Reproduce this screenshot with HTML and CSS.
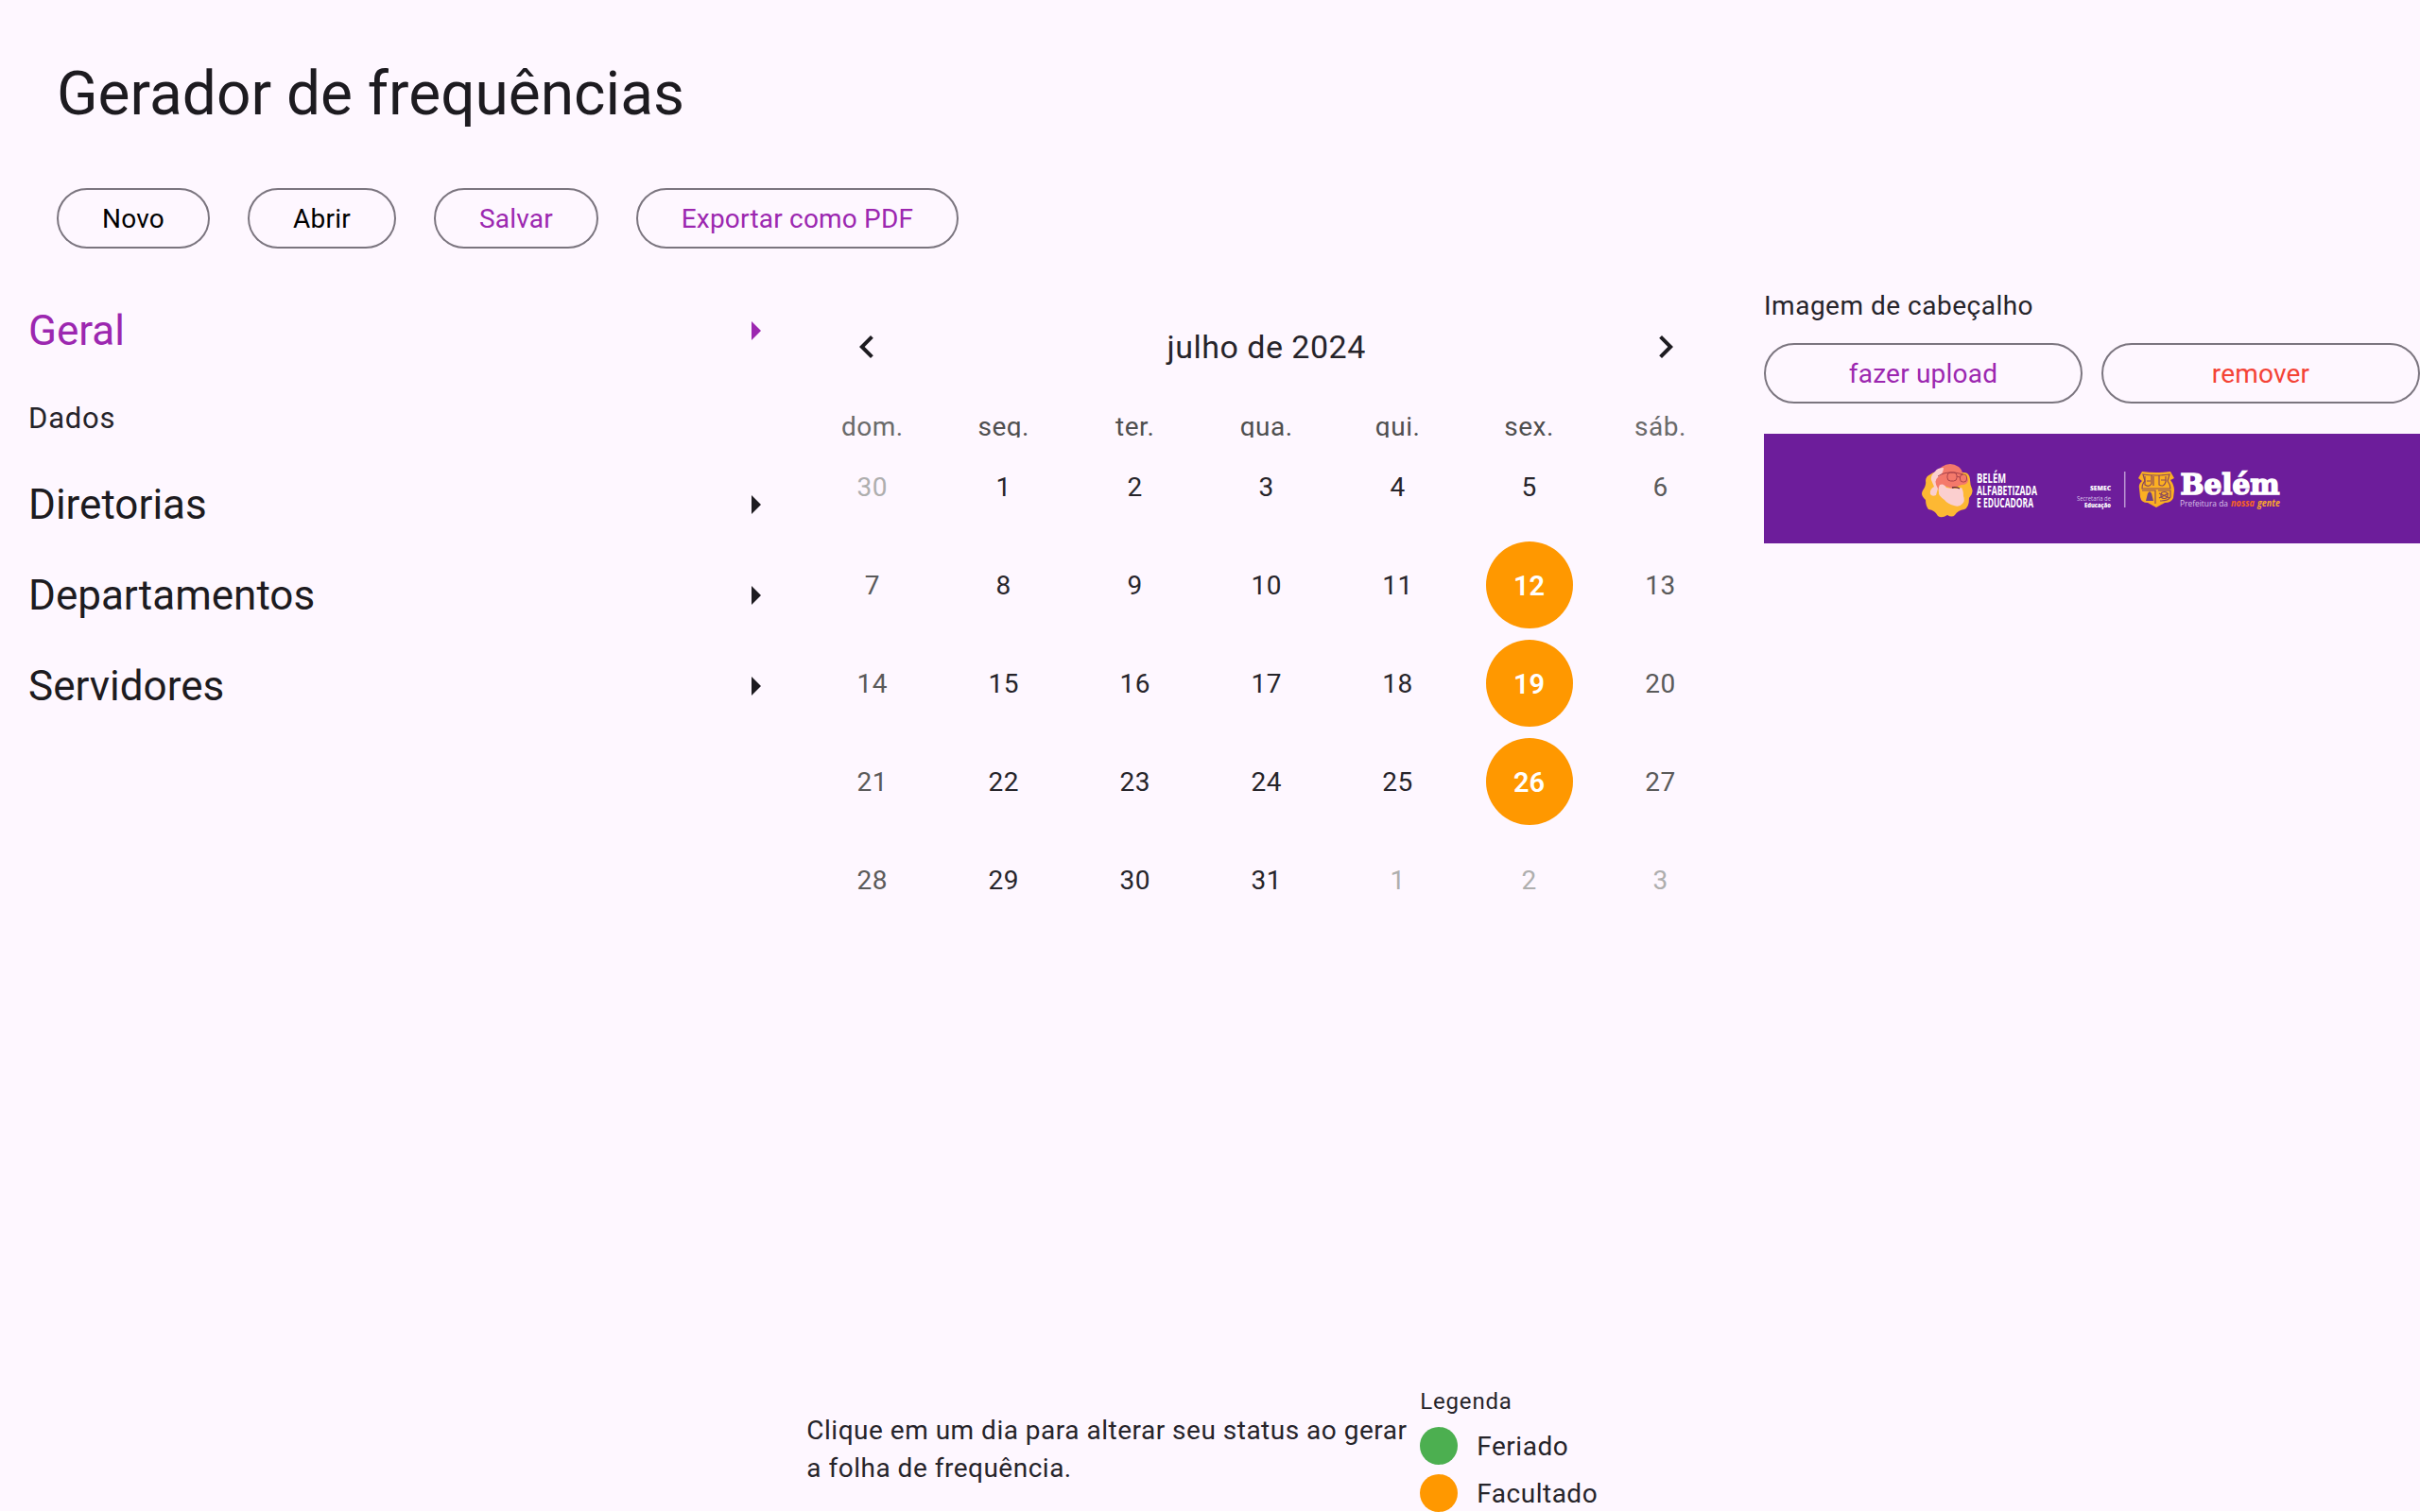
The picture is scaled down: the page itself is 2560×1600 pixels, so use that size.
FILE: index.html
```html
<!DOCTYPE html>
<html lang="pt-BR">
<head>
<meta charset="utf-8">
<title>Gerador de frequências</title>
<link rel="stylesheet" href="styles.css">
</head>
<body>
<div class="app">
  <header class="header">
    <h1 class="title">Gerador de frequências</h1>
    <div class="toolbar">
      <button class="btn btn-new">Novo</button>
      <button class="btn btn-open">Abrir</button>
      <button class="btn btn-save accent">Salvar</button>
      <button class="btn btn-export accent">Exportar como PDF</button>
    </div>
  </header>
  <main class="main">
    <nav class="sections">
      <div class="section accent"><span>Geral</span><svg class="arrow" viewBox="0 0 10 20"><path d="M0 0l10 10L0 20z"/></svg></div>
      <div class="item">Dados</div>
      <div class="section"><span>Diretorias</span><svg class="arrow" viewBox="0 0 10 20"><path d="M0 0l10 10L0 20z"/></svg></div>
      <div class="section"><span>Departamentos</span><svg class="arrow" viewBox="0 0 10 20"><path d="M0 0l10 10L0 20z"/></svg></div>
      <div class="section"><span>Servidores</span><svg class="arrow" viewBox="0 0 10 20"><path d="M0 0l10 10L0 20z"/></svg></div>
    </nav>
    <section class="center">
      <div class="month">
        <svg class="chevron" viewBox="0 0 24 24"><path d="M15.41 7.41L14 6l-6 6 6 6 1.41-1.41L10.83 12z"/></svg>
        <span>julho de 2024</span>
        <svg class="chevron" viewBox="0 0 24 24"><path d="M10 6L8.59 7.41 13.17 12l-4.58 4.59L10 18l6-6z"/></svg>
      </div>
      <div class="weekdays">
        <span class="wk-end">dom.</span><span>seg.</span><span>ter.</span><span>qua.</span><span>qui.</span><span>sex.</span><span class="wk-end">sáb.</span>
      </div>
      <div class="days">
        <span class="outside">30</span><span>1</span><span>2</span><span>3</span><span>4</span><span>5</span><span class="weekend">6</span>
        <span class="weekend">7</span><span>8</span><span>9</span><span>10</span><span>11</span><span class="optional">12</span><span class="weekend">13</span>
        <span class="weekend">14</span><span>15</span><span>16</span><span>17</span><span>18</span><span class="optional">19</span><span class="weekend">20</span>
        <span class="weekend">21</span><span>22</span><span>23</span><span>24</span><span>25</span><span class="optional">26</span><span class="weekend">27</span>
        <span class="weekend">28</span><span>29</span><span>30</span><span>31</span><span class="outside">1</span><span class="outside">2</span><span class="outside">3</span>
      </div>
      <footer class="footer">
        <p class="hint">Clique em um dia para alterar seu status ao gerar a folha de frequência.</p>
        <div class="legend">
          <div class="legend-title">Legenda</div>
          <div class="legend-row"><i class="dot green"></i><span>Feriado</span></div>
          <div class="legend-row"><i class="dot orange"></i><span>Facultado</span></div>
        </div>
      </footer>
    </section>
    <aside class="side">
      <div class="side-title">Imagem de cabeçalho</div>
      <div class="side-buttons">
        <button class="btn accent">fazer upload</button>
        <button class="btn danger">remover</button>
      </div>
      <svg class="banner" viewBox="0 0 694 116">
        <rect width="694" height="116" fill="#6d1d9b"/>
        <!-- bearded portrait on a scalloped badge -->
        <path fill="#fdb833" d="M176 43Q182 38 190 40L212 41Q217 41 218 48Q218 54 220 58Q222 63 217 68Q217 78 212 80Q205 81 202 86Q199 89 194 86Q188 90 184 87Q181 81 174 80Q171 76 171 70Q165 65 168 60Q172 54 171 50Q171 45 176 43Z"/>
        <path fill="#f4796b" d="M180 49L184 41Q185 37 188 35Q197 29 206 35Q210 38 210 43Q216 46 216 49Q216 54 209 54L199 58 191 55 184 59Z"/>
        <path fill="#fbcfcf" d="M190 36Q183 36 181 40Q176 44 177 49L180 56Q175 59 176 64Q178 67 182 65L184 58Q179 50 184 46Q190 42 190 36Z"/>
        <path fill="#fbcfcf" d="M186 54Q190 52 193 57Q202 59 209 57Q211 60 211 66Q213 71 210 74Q207 78 201 76Q194 74 191 70Q184 65 185 62Q184 57 186 54Z"/>
        <g fill="none" stroke="#a8414a" stroke-width="1"><path d="M184 45Q191 40 202 41L211 43"/><rect x="194" y="41" width="10" height="9" rx="3.5"/><rect x="207.500" y="43" width="7" height="8" rx="3"/><path d="M204 45l3 1"/></g>
        <path d="M199 57q4-1 8 1" fill="none" stroke="#5b2639" stroke-width="1.3"/>
        <g class="brand" fill="#fff">
          <text x="225" y="52" textLength="31" lengthAdjust="spacingAndGlyphs">BELÉM</text>
          <text x="225" y="64.700" textLength="64" lengthAdjust="spacingAndGlyphs">ALFABETIZADA</text>
          <text x="225" y="78" textLength="60" lengthAdjust="spacingAndGlyphs">E EDUCADORA</text>
        </g>
        <g class="agency" fill="#fff">
          <text class="heavy" x="345" y="59.5" textLength="22" lengthAdjust="spacingAndGlyphs">SEMEC</text>
          <text x="331" y="71" textLength="36" lengthAdjust="spacingAndGlyphs" fill="#d9c2e8">Secretaria de</text>
          <text class="heavy" x="339" y="77.5" textLength="28" lengthAdjust="spacingAndGlyphs">Educação</text>
        </g>
        <path d="M381.700 40V78" stroke="#bd99d4" stroke-width="1.5"/>
        <!-- coat of arms -->
        <path fill="#fbb022" d="M400 40Q415 42 430 40L434 47 430 49Q434 54 434 60L433 68Q431 73 424 73L415 78 406 73Q399 73 398 67L397 58Q396 53 400 50L396 47Z"/>
        <g fill="none" stroke="#8a4a5c" stroke-width="1.200"><path d="M401 43Q415 45 429 43L427 50Q430 54 430 58H400Q400 53 403 50ZM400 60H414V74M417 60H430V67Q428 71 419 71"/><path d="M403 45v9q4 3 7-1V44M412 45v10M418 44v10q5 3 7-3v-6M405 50h4M420 49h5"/><path d="M418 63l11 5M418 68l10-5"/><circle cx="423.500" cy="65" r="3.500"/></g>
        <path fill="#704086" d="M404 71l2-8 2-2 2 2 2 8z"/>
        <text class="city" x="440.500" y="64" textLength="105" lengthAdjust="spacingAndGlyphs" fill="#fff" stroke="#fff" stroke-width="1.600">Belém</text>
        <text class="motto" x="440" y="77" textLength="51" lengthAdjust="spacingAndGlyphs" fill="#d9c2e8">Prefeitura da</text>
        <text class="script" x="494" y="77" textLength="25" lengthAdjust="spacingAndGlyphs" fill="#fb651f">nossa</text>
        <text class="script" x="522" y="77" textLength="24" lengthAdjust="spacingAndGlyphs" fill="#fba82b">gente</text>
      </svg>
    </aside>
  </main>
</div>
</body>
</html>
```
FILE: styles.css
```css
* { box-sizing: border-box; }

body {
  margin: 0;
  background: #fef7ff;
  color: #26242a;
  font: 28px/40px Roboto, sans-serif;
  letter-spacing: 0.5px;
}

.app {
  width: 2560px;
  height: 1600px;
  overflow: hidden;
  display: flex;
  flex-direction: column;
  box-shadow: inset 0 -1px #fff;
}

.header { height: 303px; padding: 60px 60px 0; }

.title {
  margin: 0;
  color: #1d1b20;
  font-size: 64px;
  line-height: 80px;
  font-weight: 400;
  letter-spacing: 0;
}

.toolbar { display: flex; gap: 40px; margin-top: 59px; }

.btn {
  height: 64px;
  padding: 2px 0 0;
  border: 2px solid #7b757f;
  border-radius: 32px;
  background: none;
  color: #000;
  font: 400 28px/40px Roboto, sans-serif;
  letter-spacing: 0.2px;
}

.btn-new { width: 162px; }
.btn-open { width: 157px; }
.btn-save { width: 174px; }
.btn-export { width: 341px; }

.accent { color: #9c27b0; }
.danger { color: #f44336; }

.main {
  flex: 1;
  min-height: 0;
  display: grid;
  grid-template-columns: 853.33px 972.67px 694px;
}

.side { margin-left: 40px; width: 694px; }

.sections { padding-left: 30px; }

.section {
  height: 96px;
  padding: 0 48px 3px 0;
  display: flex;
  align-items: center;
  justify-content: space-between;
  color: #1d1b20;
  font-size: 44px;
  line-height: 56px;
  letter-spacing: 0;
}

.section.accent { color: #9c27b0; }

.arrow { width: 10px; height: 20px; margin-top: 1px; fill: currentColor; }

.item { height: 88px; line-height: 87px; font-size: 31px; letter-spacing: 0.8px; }

.center { display: flex; flex-direction: column; min-height: 0; }

.month {
  height: 128px;
  padding: 0 40px;
  display: flex;
  align-items: center;
  justify-content: space-between;
  font-size: 34px;
}

.chevron { width: 48px; height: 48px; fill: #1d1b20; }

.weekdays {
  height: 32px;
  display: grid;
  grid-template-columns: repeat(7, 1fr);
  overflow: hidden;
  text-align: center;
  line-height: 42px;
  color: #4f4f4f;
}

.wk-end { color: #6a6a6a; }

.days {
  display: grid;
  grid-template-columns: repeat(7, 1fr);
  grid-auto-rows: 104px;
  align-items: center;
  justify-items: center;
  line-height: 42px;
}

.days span { padding-top: 1px; }
.days .weekend { color: #5a5a5a; }
.days .outside { color: #aeaeae; }

.days .optional {
  width: 92px;
  height: 92px;
  border-radius: 50%;
  background: #ff9800;
  color: #fff;
  font-size: 29px;
  font-weight: 600;
  letter-spacing: 0;
  line-height: 92px;
  text-align: center;
}

.footer { margin-top: auto; display: flex; align-items: center; }

.hint { width: 649px; margin: 0; padding-top: 7px; }

.legend-title { height: 49px; line-height: 45px; font-size: 24px; letter-spacing: 0.8px; }

.legend-row { display: flex; align-items: center; gap: 20px; height: 40px; line-height: 41px; }
.legend-row + .legend-row { margin-top: 10px; }

.dot { width: 40px; height: 40px; border-radius: 50%; }
.green { background: #4caf50; }
.orange { background: #ff9800; }

.side-title { line-height: 42px; height: 40px; }

.side-buttons {
  display: grid;
  grid-template-columns: 1fr 1fr;
  gap: 20px;
  margin: 20px 0 32px;
}

.banner { display: block; width: 694px; height: 116px; }
.brand { font: 700 14px "Open Sans", sans-serif; letter-spacing: 0; }
.agency { font: 400 6.5px "Open Sans", sans-serif; letter-spacing: 0; }
.heavy { font-weight: 800; }
.city { font: 700 30px "DejaVu Serif", serif; letter-spacing: 0; }
.motto { font: 400 9px "Open Sans", sans-serif; letter-spacing: 0; }
.script { font: italic 700 10px "Open Sans", sans-serif; letter-spacing: 0; }
```
